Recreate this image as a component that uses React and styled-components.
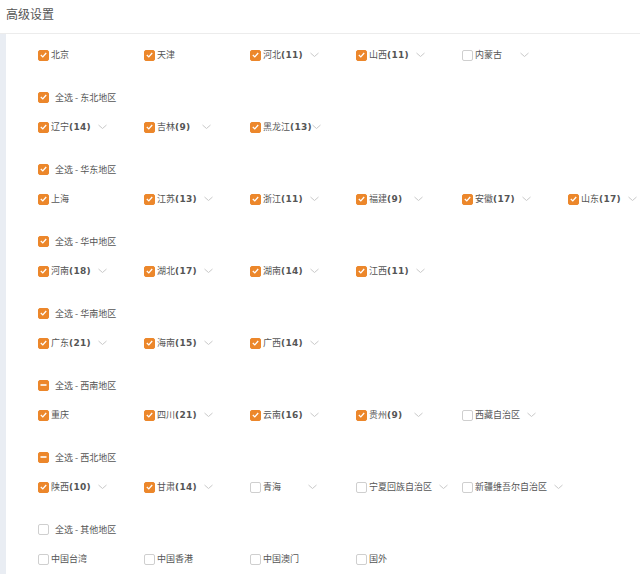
import React from "react";
import styled, { createGlobalStyle } from "styled-components";

const GlobalStyle = createGlobalStyle`
  body {
    margin: 0;
    background: #fff;
    font-family: "Noto Sans CJK SC", "Noto Sans", sans-serif;
    color: #555;
  }
`;

const groups = [
  {
    title: null,
    items: [
      { name: "北京", on: true },
      { name: "天津", on: true },
      { name: "河北", count: 11, on: true, more: true },
      { name: "山西", count: 11, on: true, more: true },
      { name: "内蒙古", on: false, more: true },
    ],
  },
  {
    title: "东北地区",
    state: "on",
    items: [
      { name: "辽宁", count: 14, on: true, more: true },
      { name: "吉林", count: 9, on: true, more: true },
      { name: "黑龙江", count: 13, on: true, more: true, tight: true },
    ],
  },
  {
    title: "华东地区",
    state: "on",
    items: [
      { name: "上海", on: true },
      { name: "江苏", count: 13, on: true, more: true },
      { name: "浙江", count: 11, on: true, more: true },
      { name: "福建", count: 9, on: true, more: true },
      { name: "安徽", count: 17, on: true, more: true },
      { name: "山东", count: 17, on: true, more: true },
    ],
  },
  {
    title: "华中地区",
    state: "on",
    items: [
      { name: "河南", count: 18, on: true, more: true },
      { name: "湖北", count: 17, on: true, more: true },
      { name: "湖南", count: 14, on: true, more: true },
      { name: "江西", count: 11, on: true, more: true },
    ],
  },
  {
    title: "华南地区",
    state: "on",
    items: [
      { name: "广东", count: 21, on: true, more: true },
      { name: "海南", count: 15, on: true, more: true },
      { name: "广西", count: 14, on: true, more: true },
    ],
  },
  {
    title: "西南地区",
    state: "half",
    items: [
      { name: "重庆", on: true },
      { name: "四川", count: 21, on: true, more: true },
      { name: "云南", count: 16, on: true, more: true },
      { name: "贵州", count: 9, on: true, more: true },
      { name: "西藏自治区", on: false, more: true },
    ],
  },
  {
    title: "西北地区",
    state: "half",
    items: [
      { name: "陕西", count: 10, on: true, more: true },
      { name: "甘肃", count: 14, on: true, more: true },
      { name: "青海", on: false, more: true },
      { name: "宁夏回族自治区", on: false, more: true },
      { name: "新疆维吾尔自治区", on: false, more: true },
    ],
  },
  {
    title: "其他地区",
    state: "off",
    items: [
      { name: "中国台湾", on: false },
      { name: "中国香港", on: false },
      { name: "中国澳门", on: false },
      { name: "国外", on: false },
    ],
  },
];

const Page = styled.div`
  width: 640px;
  overflow: hidden;
`;

const Header = styled.div`
  height: 34px;
  box-sizing: border-box;
  border-bottom: 1px solid #ececec;
  padding: 5px 0 0 6px;
  font-size: 12px;
  line-height: 18px;
  color: #555;
`;

const Body = styled.div`
  border-left: 6px solid #e9edf3;
  padding: 6px 0 0 32px;
`;

const Group = styled.div`
  display: flex;
  flex-direction: column;
  margin-bottom: 12px;
`;

const GroupHead = styled.div`
  height: 30px;
  display: flex;
  align-items: center;
  gap: 6px;
  font-size: 9px;
  color: #555;
`;

const Row = styled.div`
  display: grid;
  grid-template-columns: repeat(6, 106px);
  height: 30px;
  align-items: center;
`;

const Item = styled.div`
  display: flex;
  align-items: center;
  white-space: nowrap;
  font-size: 9px;
  color: #555;
`;

const Box = styled.span`
  width: 11px;
  height: 11px;
  box-sizing: border-box;
  border-radius: 2px;
  flex: none;
  display: inline-flex;
  align-items: center;
  justify-content: center;
  background: ${(p) => (p.$state === "off" ? "#fff" : "#ec872b")};
  border: 1px solid ${(p) => (p.$state === "off" ? "#cfcfcf" : "#ec872b")};
`;

const Label = styled.span`
  margin-left: 2px;
  min-width: ${(p) => (p.$tight ? "46px" : "38px")};
  padding-right: ${(p) => (p.$tight ? "0" : "7px")};
  line-height: 12px;
`;

const Count = styled.b`
  font-family: "DejaVu Sans", sans-serif;
  font-size: 9px;
  color: #555;
  letter-spacing: 0.3px;
`;

const Chevron = () => (
  <svg width="9" height="6" viewBox="0 0 9 6" style={{ flex: "none" }}>
    <path d="M0.5 1 L4.5 4.5 L8.5 1" fill="none" stroke="#c8c8c8" strokeWidth="1" />
  </svg>
);

const CheckBox = ({ state }) => (
  <Box $state={state}>
    {state === "on" && (
      <svg width="7" height="6" viewBox="0 0 7 6">
        <path d="M0.8 3 L2.8 4.9 L6.2 1" fill="none" stroke="#fff" strokeWidth="1.3" />
      </svg>
    )}
    {state === "half" && (
      <svg width="7" height="6" viewBox="0 0 7 6">
        <path d="M0.5 3 H6.5" stroke="#fff" strokeWidth="1.6" />
      </svg>
    )}
  </Box>
);

const Province = ({ item }) => (
  <Item>
    <CheckBox state={item.on ? "on" : "off"} />
    <Label $tight={item.tight}>
      {item.name}
      {item.count != null && <Count>({item.count})</Count>}
    </Label>
    {item.more && <Chevron />}
  </Item>
);

export default function App() {
  return (
    <Page>
      <GlobalStyle />
      <Header>高级设置</Header>
      <Body>
        {groups.map((g, i) => (
          <Group key={i}>
            {g.title && (
              <GroupHead>
                <CheckBox state={g.state} />
                <span>全选 - {g.title}</span>
              </GroupHead>
            )}
            <Row>
              {g.items.map((it) => (
                <Province key={it.name} item={it} />
              ))}
            </Row>
          </Group>
        ))}
      </Body>
    </Page>
  );
}
